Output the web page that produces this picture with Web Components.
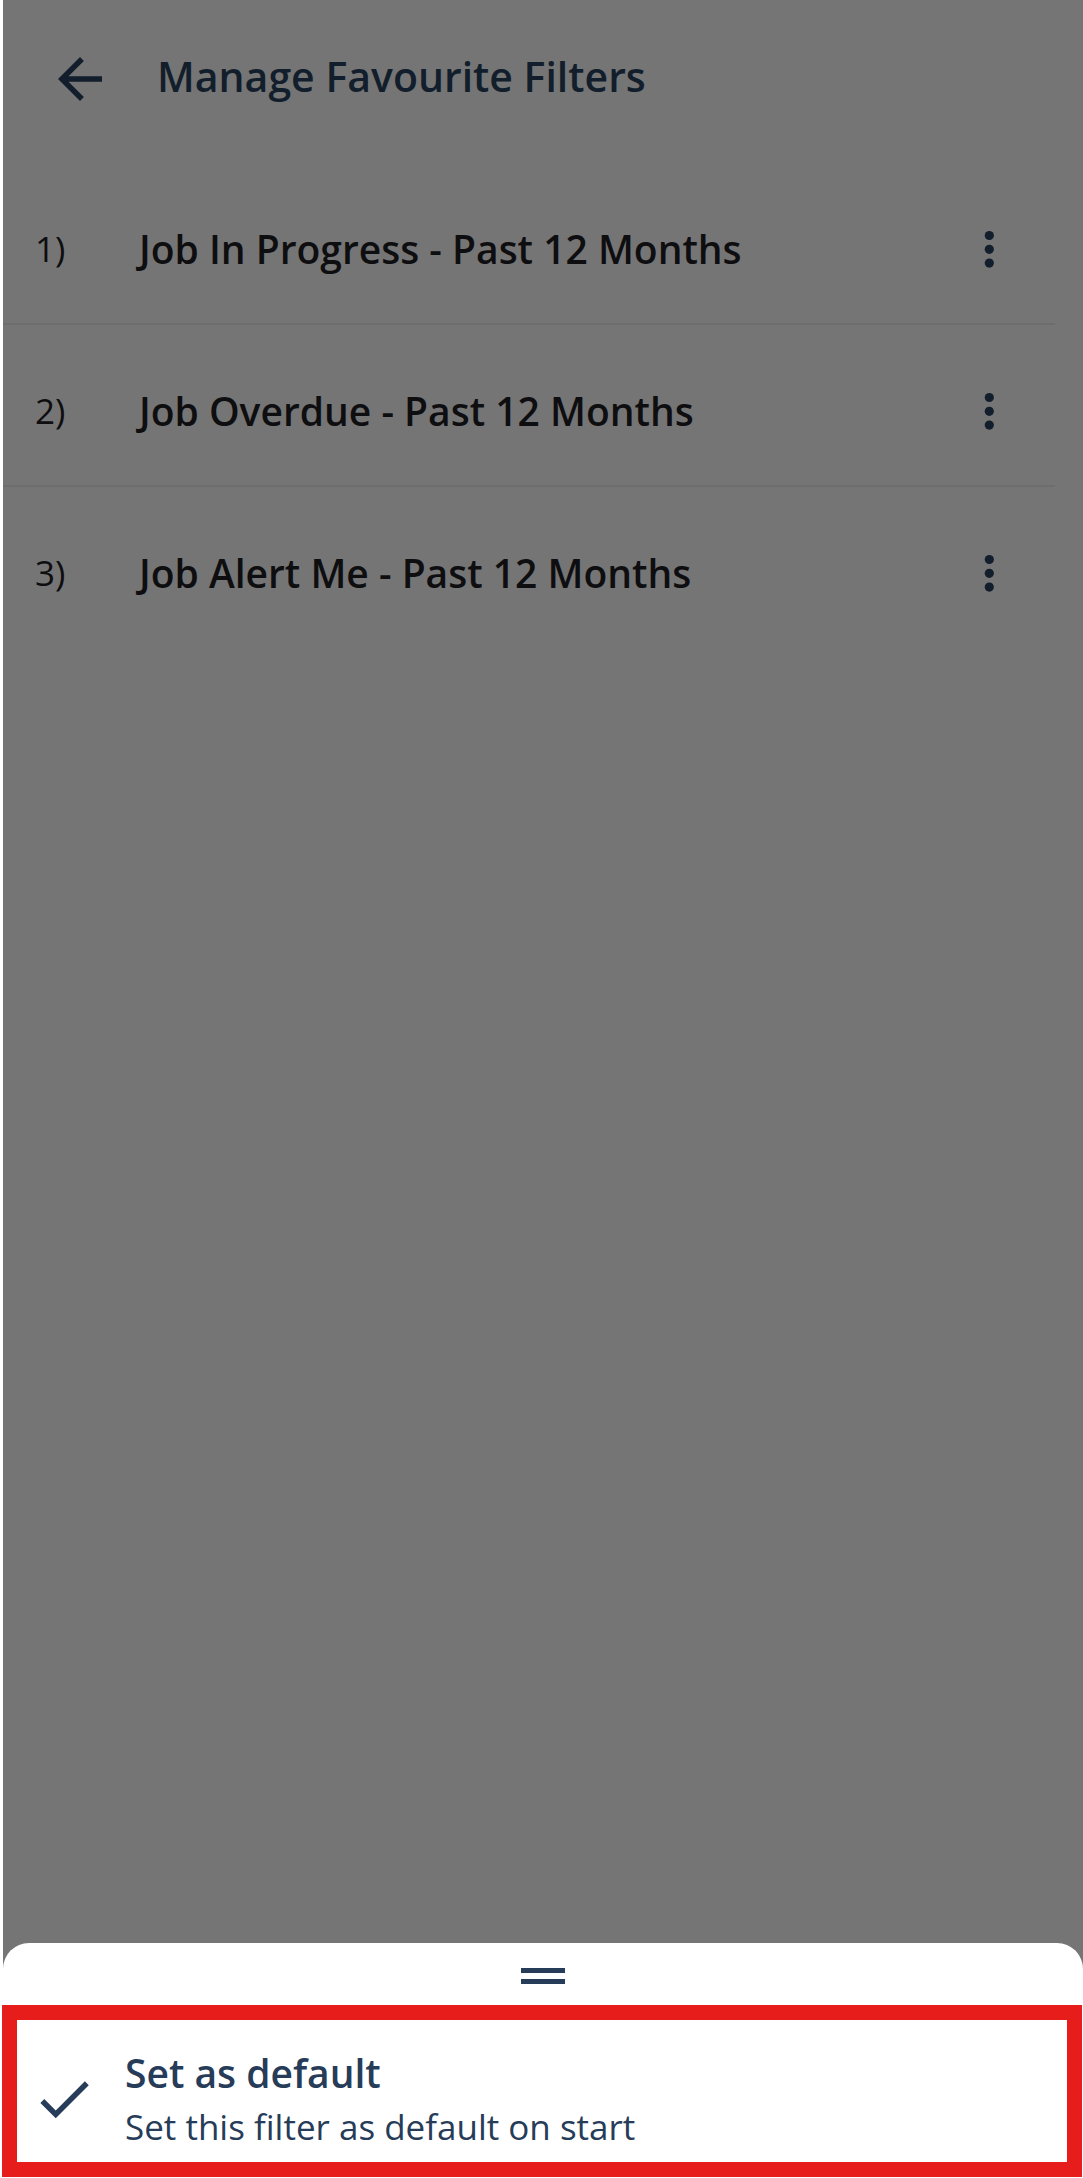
<!DOCTYPE html>
<html lang="en">
<head>
<meta charset="utf-8">
<meta name="viewport" content="width=device-width, initial-scale=1">
<title>Manage Favourite Filters</title>
<style>
  body {
    margin: 0;
    background: #fff;
    font-family: "Open Sans", "Noto Sans", sans-serif;
    --navy: #263c58;
    --navy-dim: #121e2b;
    --ink-dim: #0e0e10;
    --dim: #757575;
    --line: #6d6d6d;
    --alert: #e71d1c;
  }
</style>
</head>
<body>
<app-screen>
  <page-header slot="header">Manage Favourite Filters</page-header>
  <filter-list>
    <filter-row><span slot="index">1)</span>Job In Progress - Past 12 Months</filter-row>
    <filter-row><span slot="index">2)</span>Job Overdue - Past 12 Months</filter-row>
    <filter-row><span slot="index">3)</span>Job Alert Me - Past 12 Months</filter-row>
  </filter-list>
  <bottom-sheet slot="sheet">
    <sheet-action>Set as default<span slot="detail">Set this filter as default on start</span></sheet-action>
  </bottom-sheet>
</app-screen>

<script>
  const define = (name, html, role) => {
    const template = document.createElement('template');
    template.innerHTML = html;
    customElements.define(name, class extends HTMLElement {
      constructor() {
        super();
        this.attachShadow({ mode: 'open' }).append(template.content.cloneNode(true));
      }
      connectedCallback() {
        if (role) this.setAttribute('role', role);
      }
    });
  };

  define('app-screen', `
    <style>
      :host { display: flex; flex-direction: column; min-height: 100vh; box-sizing: border-box; padding-left: 3px; }
      main { flex: 1; background: var(--dim); }
    </style>
    <main><slot name="header"></slot><slot></slot></main>
    <slot name="sheet"></slot>`);

  define('page-header', `
    <style>
      :host { display: block; }
      header { display: flex; align-items: center; gap: 44px; height: 163px; padding: 0 44px 6px; box-sizing: border-box; color: var(--navy-dim); }
      button { all: unset; flex: none; width: 66px; height: 66px; cursor: pointer; }
      svg { display: block; width: 66px; height: 66px; fill: currentColor; }
      h1 { margin: 0; padding-bottom: 6px; font-size: 41px; line-height: 56px; font-weight: 600; }
    </style>
    <header>
      <button type="button" aria-label="Back"><svg viewBox="0 0 24 24" aria-hidden="true"><path d="M20 11H7.83l5.59-5.59L12 4l-8 8 8 8 1.41-1.41L7.83 13H20z"/></svg></button>
      <h1><slot></slot></h1>
    </header>`);

  define('filter-list', `
    <style>
      :host { display: block; margin-right: 28px; }
      ::slotted(filter-row:last-child) { border-bottom-color: transparent; }
    </style>
    <slot></slot>`, 'list');

  define('filter-row', `
    <style>
      :host { display: flex; align-items: center; height: 162px; box-sizing: border-box; padding: 12px 30px 0 32px; border-bottom: 2px solid var(--line); color: var(--ink-dim); }
      .index { flex: none; width: 104px; font-size: 35px; line-height: 48px; font-weight: 400; }
      .name { flex: 1; font-size: 39px; line-height: 48px; font-weight: 600; }
      button { all: unset; flex: none; width: 72px; height: 72px; color: var(--navy-dim); cursor: pointer; }
      svg { display: block; width: 72px; height: 72px; fill: currentColor; }
    </style>
    <span class="index"><slot name="index"></slot></span>
    <span class="name"><slot></slot></span>
    <button type="button" aria-label="More options"><svg viewBox="0 0 72 72" aria-hidden="true"><circle cx="36.3" cy="22.5" r="4.6"/><circle cx="36.3" cy="36.3" r="4.6"/><circle cx="36.3" cy="50.1" r="4.6"/></svg></button>`, 'listitem');

  define('bottom-sheet', `
    <style>
      :host { display: block; background: var(--dim); }
      section { background: #fff; border-radius: 26px 26px 0 0; padding-bottom: 1px; }
      .handle { display: flex; flex-direction: column; align-items: center; justify-content: center; gap: 6px; height: 62px; padding-top: 4px; box-sizing: border-box; }
      .handle i { width: 44px; height: 5px; background: var(--navy); }
    </style>
    <section aria-label="Filter options">
      <div class="handle"><i></i><i></i></div>
      <slot></slot>
    </section>`);

  define('sheet-action', `
    <style>
      :host { display: block; margin: 0 1px 0 -1px; }
      button { all: unset; display: flex; align-items: center; gap: 28px; width: 100%; box-sizing: border-box; border: 15px solid var(--alert); padding: 25px 14px 9px; color: var(--navy); cursor: pointer; }
      svg { flex: none; width: 66px; height: 66px; fill: currentColor; }
      .text { display: flex; flex-direction: column; }
      .title { font-size: 39px; line-height: 56px; font-weight: 600; }
      .detail { font-size: 35px; line-height: 52px; font-weight: 400; }
    </style>
    <button type="button">
      <svg viewBox="0 0 24 24" aria-hidden="true"><path d="M9 16.17 4.83 12l-1.42 1.41L9 19 21 7l-1.41-1.41z"/></svg>
      <span class="text"><span class="title"><slot></slot></span><span class="detail"><slot name="detail"></slot></span></span>
    </button>`);
</script>
</body>
</html>
